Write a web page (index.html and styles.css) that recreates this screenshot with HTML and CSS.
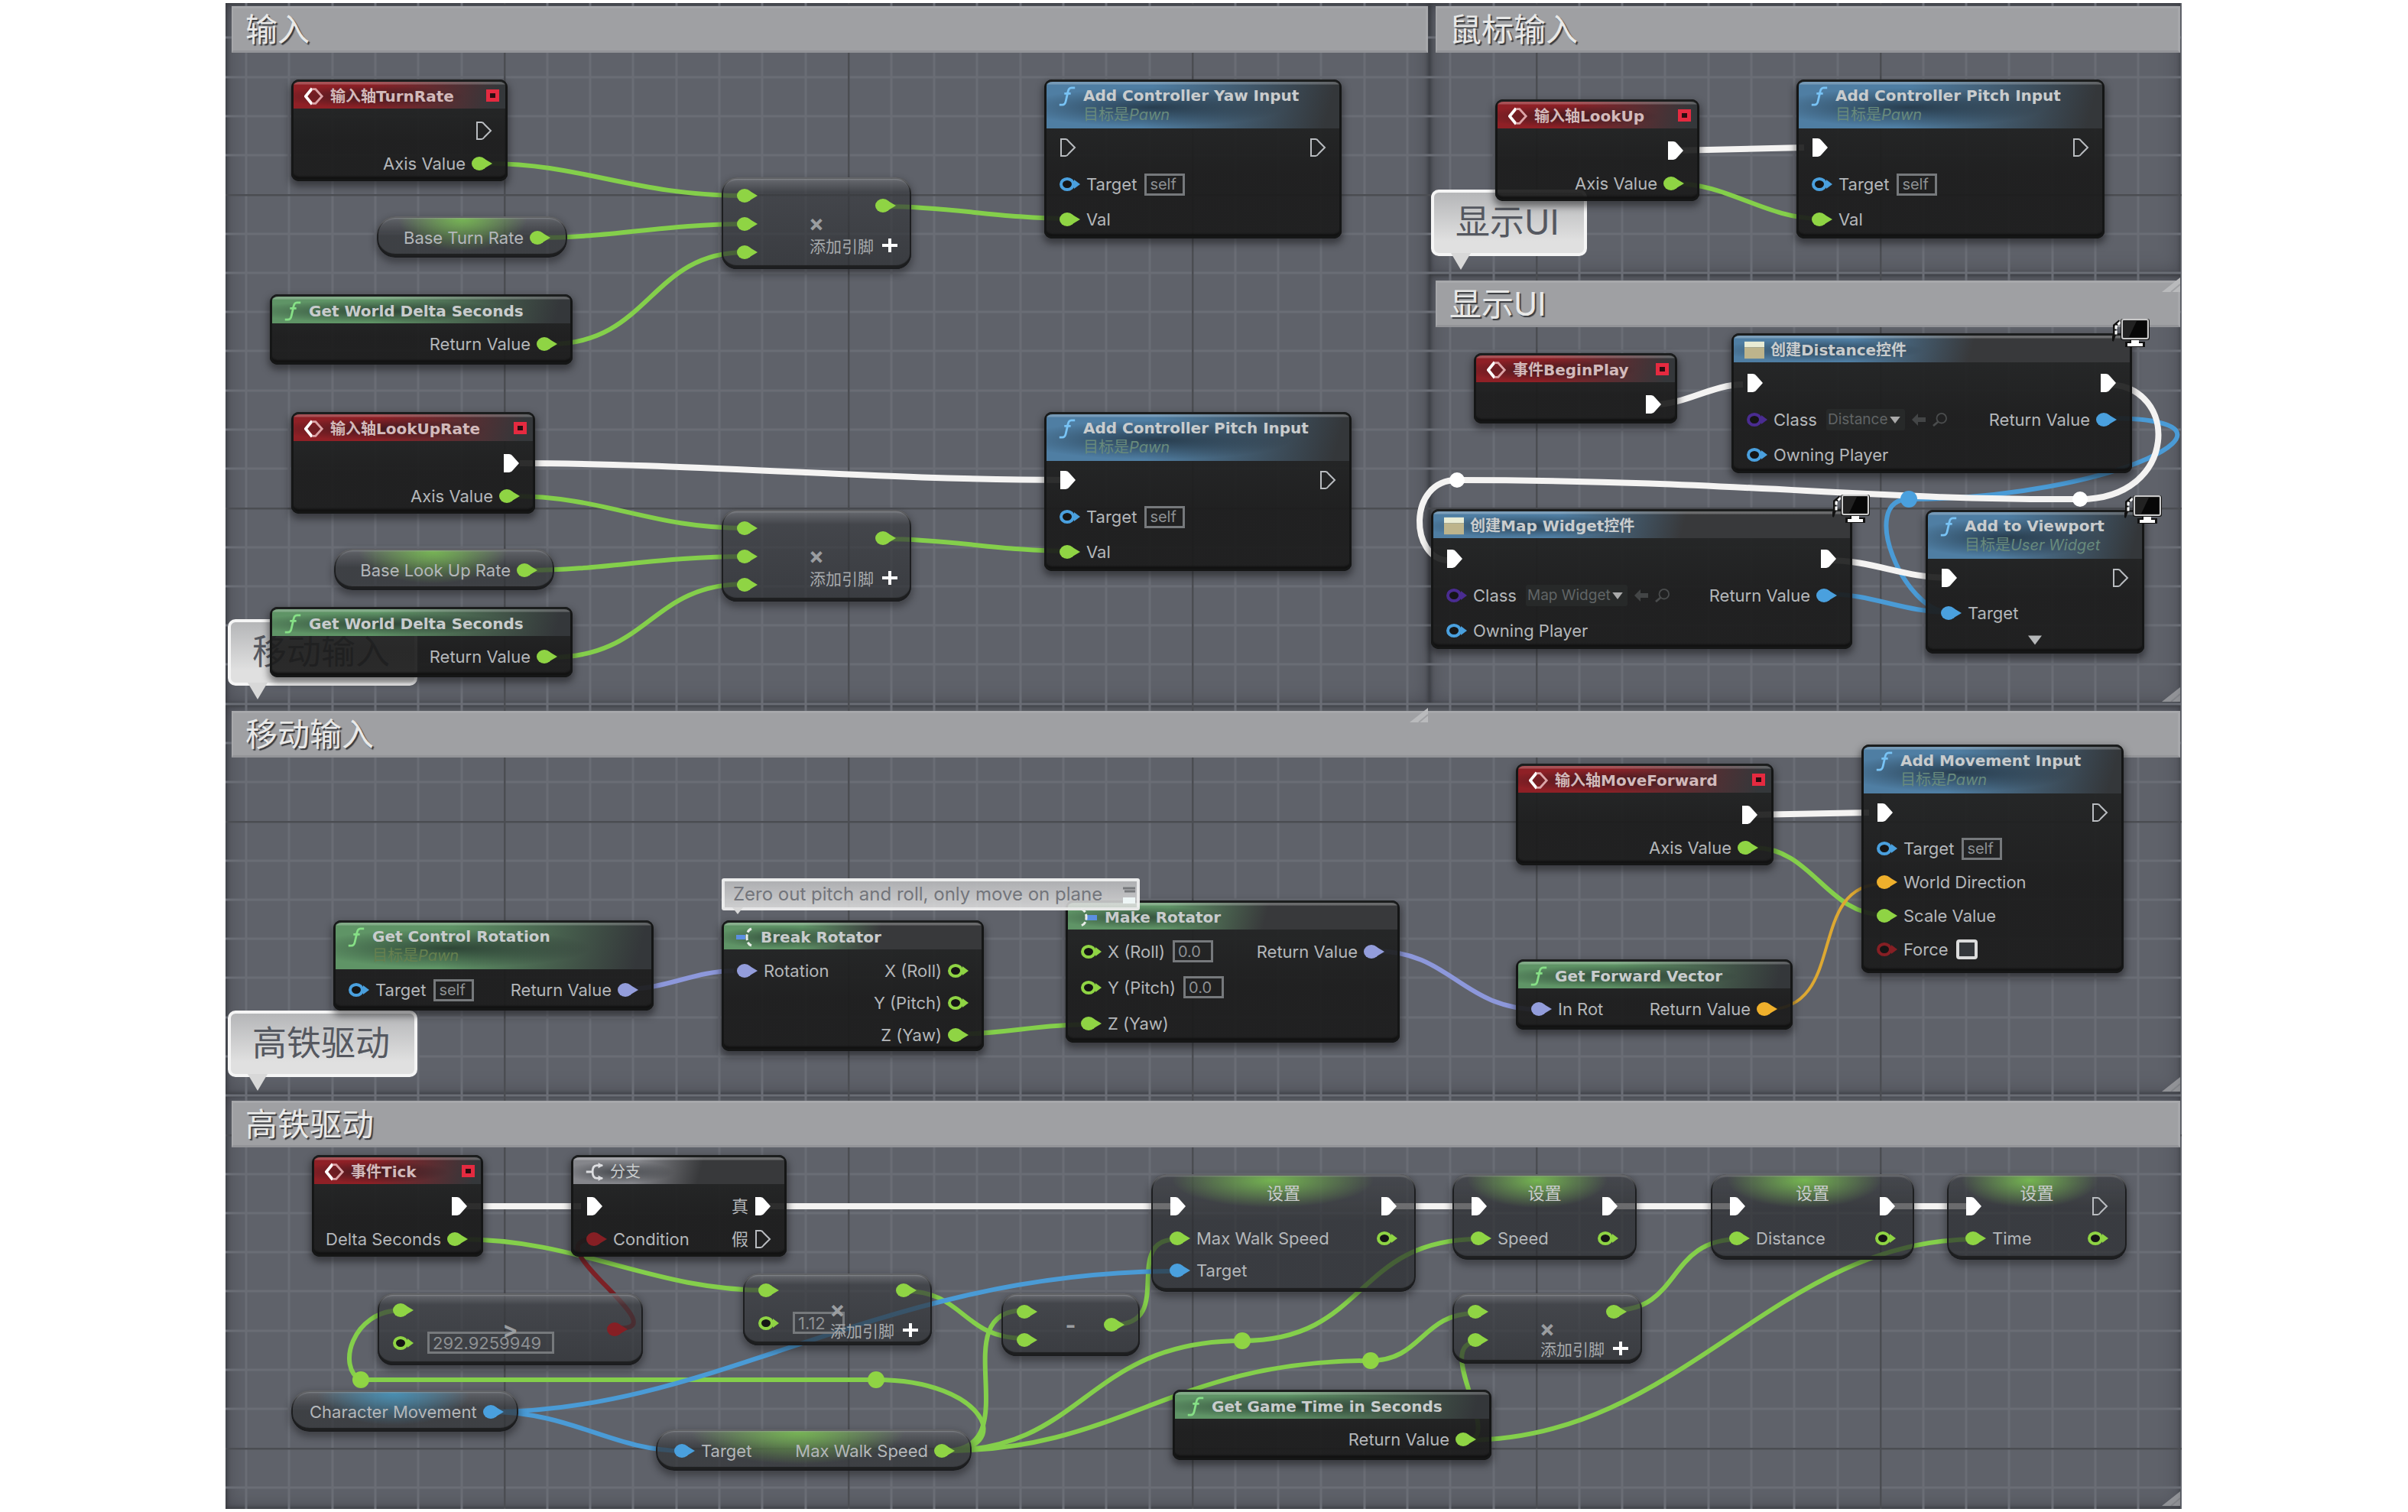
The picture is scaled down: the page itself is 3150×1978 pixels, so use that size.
FILE: index.html
```html
<!DOCTYPE html>
<html lang="zh-CN">
<head>
<meta charset="utf-8">
<title>蓝图</title>
<link rel="stylesheet" href="styles.css">
</head>
<body>
<svg class="defs" aria-hidden="true">
  <defs>
    <symbol id="dot" viewBox="0 0 27 20"><ellipse cx="10" cy="10" rx="10" ry="9" fill="currentColor"/><path d="M17 4l10 6-10 6z" fill="currentColor"/></symbol>
    <symbol id="ring" viewBox="0 0 27 20"><ellipse cx="10" cy="10" rx="8" ry="7" fill="#151515" stroke="currentColor" stroke-width="4"/><path d="M19 4l8 6-8 6z" fill="currentColor"/></symbol>
    <symbol id="exec" viewBox="0 0 22 26"><path d="M1 1h7q3 0 5 3l8 9-8 9q-2 3-5 3H1z" fill="#fff"/></symbol>
    <symbol id="exec-open" viewBox="0 0 22 26"><path d="M2 2h6q2 0 4 3l8 8-8 8q-2 3-4 3H2z" fill="none" stroke="#b9bcc0" stroke-width="2"/></symbol>
    <symbol id="event" viewBox="0 0 28 26"><path d="M11 2L2 13l9 11" fill="none" stroke="#fff" stroke-width="4"/><path d="M11 3h5l9 10-9 10h-5" fill="none" stroke="#dba5a8" stroke-width="3"/></symbol>
    <symbol id="func" viewBox="0 0 26 28"><path d="M24 2h-5q-4 0-5 6l-3 13q-1 5-5 5H2M9 10h9" fill="none" stroke="currentColor" stroke-width="3"/></symbol>
    <symbol id="widget" viewBox="0 0 28 24"><path d="M0 0h28v8H0z" fill="#e9ecd5"/><path d="M0 8h28v16H0z" fill="#bdb48c"/></symbol>
    <symbol id="branch" viewBox="0 0 28 26"><path d="M26 4h-8q-6 0-6 9t6 9h8M12 13H3" fill="none" stroke="#dcdde0" stroke-width="3"/><path d="M20 0l7 4-7 4zM20 18l7 4-7 4z" fill="#dcdde0"/></symbol>
    <symbol id="break" viewBox="0 0 26 26"><path d="M2 10h12v6H2z" fill="#5b8fe0"/><path d="M22 2q-6 2-6 11t6 11" fill="none" stroke="#e8ece8" stroke-width="3" stroke-dasharray="7 3"/></symbol>
    <symbol id="make" viewBox="0 0 26 26"><path d="M9 10h15v7H9z" fill="#5b8fe0"/><path d="M3 2q7 2 7 11T3 24" fill="none" stroke="#e8ece8" stroke-width="3" stroke-dasharray="7 3"/></symbol>
    <symbol id="plus" viewBox="0 0 22 20"><path d="M11 1v18M1 10h20" stroke="#fff" stroke-width="4"/></symbol>
    <symbol id="caret" viewBox="0 0 18 12"><path d="M0 0h18L9 12z" fill="currentColor"/></symbol>
    <symbol id="back" viewBox="0 0 20 18"><path d="M9 1L1 9l8 8v-5h10V6H9z" fill="#434546"/></symbol>
    <symbol id="find" viewBox="0 0 22 20"><circle cx="13" cy="8" r="7" fill="none" stroke="#4a4c4d" stroke-width="2"/><path d="M8 13l-7 6" stroke="#4a4c4d" stroke-width="3"/></symbol>
    <symbol id="grip" viewBox="0 0 24 19"><path d="M24 0v19H0z" fill="#b9babc"/><path d="M12 19L24 9" stroke="#a0a1a4" stroke-width="2"/></symbol>
    <symbol id="monitor" viewBox="0 0 50 40"><path d="M10 4L3 10v12l-3 8" fill="none" stroke="#111" stroke-width="4"/><path d="M11 5L5 11v11" fill="none" stroke="#fff" stroke-width="3" stroke-dasharray="5 2"/><rect x="11" y="1" width="38" height="28" rx="3" fill="#111"/><rect x="13" y="2" width="34" height="25" rx="2" fill="#222" stroke="#c9c9c9" stroke-width="2"/><path d="M32 4h13v21H22z" fill="#070707"/><path d="M17 31h26v7H17z" fill="#111"/><path d="M25 29h10v4h5v4H20v-4h5z" fill="#fff"/></symbol>
    <pattern id="mesh" x="659" y="254" width="450" height="410" patternUnits="userSpaceOnUse" patternTransform="translate(-295 -4)">
      <path d="M57 0v410M113 0v410M169 0v410M226 0v410M282 0v410M338 0v410M395 0v410M0 52h450M0 103h450M0 154h450M0 205h450M0 257h450M0 308h450M0 359h450" stroke="#6a6d75" stroke-width="3"/>
      <path d="M1 0v410M0 1h450" stroke="#4b4d52" stroke-width="3"/>
    </pattern>
  </defs>
</svg>

<main class="page">
  <div class="board">
    <section class="comment look flush"><h2>输入</h2><svg class="grip over"><use href="#grip"/></svg></section>
    <section class="comment mouse flush"><h2>鼠标输入</h2><svg class="grip over"><use href="#grip"/></svg></section>
    <section class="comment ui"><h2>显示UI</h2><svg class="grip"><use href="#grip"/></svg></section>
    <section class="comment move"><h2>移动输入</h2><svg class="grip"><use href="#grip"/></svg></section>
    <section class="comment train"><h2>高铁驱动</h2><svg class="grip"><use href="#grip"/></svg></section>
  </div>

  <svg class="mesh" aria-hidden="true"><rect width="100%" height="100%" fill="url(#mesh)"/></svg>

  <p class="bubble b-ui">显示UI</p>
  <p class="bubble b-move">移动输入</p>
  <p class="bubble b-train">高铁驱动</p>

  <svg class="wires" aria-hidden="true">
    <g class="w-float">
      <path d="M640 214C760 214 830 256 975 256"/>
      <path d="M705 311C800 311 870 293 975 293"/>
      <path d="M720 450C850 450 850 330 975 330"/>
      <path d="M1160 270C1240 270 1310 286 1400 286"/>
      <path d="M670 649C790 649 850 691 975 691"/>
      <path d="M690 746C790 746 860 728 975 728"/>
      <path d="M720 860C850 860 850 764 975 764"/>
      <path d="M1160 705C1240 705 1310 721 1400 721"/>
      <path d="M2190 240C2260 240 2310 286 2380 286"/>
      <path d="M2295 1109C2370 1109 2390 1197 2465 1197"/>
      <path d="M1250 1353C1310 1353 1360 1340 1425 1340"/>
      <path d="M600 1621C760 1621 850 1688 1005 1688"/>
      <path d="M1146 1805H472C440 1790 460 1714 525 1714"/>
      <path d="M1235 1898C1330 1898 1290 1805 1146 1805"/>
      <path d="M1235 1898C1350 1898 1230 1714 1340 1714"/>
      <path d="M1235 1898C1420 1898 1420 1754 1625 1754"/>
      <path d="M1235 1898C1470 1898 1530 1780 1793 1780"/>
      <path d="M1625 1754C1790 1754 1770 1621 1935 1621"/>
      <path d="M1793 1780C1860 1780 1860 1718 1930 1718"/>
      <path d="M1185 1689C1260 1689 1260 1751 1340 1751"/>
      <path d="M1457 1733C1540 1733 1465 1621 1540 1621"/>
      <path d="M2112 1714C2200 1714 2180 1621 2275 1621"/>
      <path d="M1918 1884C1970 1884 1870 1755 1935 1755"/>
      <path d="M1918 1884C2200 1884 2320 1621 2585 1621"/>
    </g>
    <g class="w-object">
      <path d="M2755 547C2980 547 2760 653 2497 653"/>
      <path d="M2497 653C2430 653 2490 801 2550 801"/>
      <path d="M2390 777C2450 777 2490 801 2550 801"/>
      <path d="M640 1847C940 1847 1150 1663 1540 1663"/>
      <path d="M640 1847C750 1847 800 1898 895 1898"/>
    </g>
    <g class="w-exec">
      <path d="M680 606C900 606 1150 628 1396 628"/>
      <path d="M2190 197L2360 193"/>
      <path d="M2165 529C2205 529 2240 503 2280 503"/>
      <path d="M2756 503C2852 503 2850 653 2721 653"/>
      <path d="M2721 653C2450 655 2270 628 1906 628"/>
      <path d="M1906 628C1840 628 1845 733 1895 733"/>
      <path d="M2392 733C2450 733 2490 756 2550 756"/>
      <path d="M2290 1066L2445 1063"/>
      <path d="M600 1578H760M1000 1578H1540M1815 1578H1934M2105 1578H2270M2470 1578H2584"/>
    </g>
    <path class="w-vector" d="M2310 1321C2420 1321 2360 1156 2465 1156"/>
    <g class="w-rotator">
      <path d="M820 1294C870 1294 910 1270 960 1270"/>
      <path d="M1797 1244C1900 1244 1910 1321 2018 1321"/>
    </g>
    <path class="w-bool" d="M805 1737C895 1745 695 1625 775 1621"/>
    <g class="knots">
      <g class="k-exec"><circle cx="2721" cy="653" r="10"/><circle cx="1906" cy="628" r="10"/></g>
      <circle class="k-object" cx="2497" cy="653" r="11"/>
      <g class="k-float"><circle cx="472" cy="1805" r="11"/><circle cx="1146" cy="1805" r="11"/><circle cx="1625" cy="1754" r="11"/><circle cx="1793" cy="1780" r="11"/></g>
    </g>
  </svg>

  <!-- 输入 -->
  <article class="node event n-turn">
    <h3><svg class="icon"><use href="#event"/></svg>输入轴TurnRate<i class="delegate"></i></h3>
    <div class="body"><div class="outs">
      <span class="pin exec"><svg><use href="#exec-open"/></svg></span>
      <span class="pin float">Axis Value<svg><use href="#dot"/></svg></span>
    </div></div>
  </article>
  <article class="node getter float-get n-baseturn"><span class="pin float">Base Turn Rate<svg><use href="#dot"/></svg></span></article>
  <article class="node pure n-delta1">
    <h3><svg class="icon"><use href="#func"/></svg>Get World Delta Seconds</h3>
    <div class="body"><div class="outs"><span class="pin float">Return Value<svg><use href="#dot"/></svg></span></div></div>
  </article>
  <article class="node op op3 n-mul1">
    <div class="ins"><span class="pin float"><svg><use href="#dot"/></svg></span><span class="pin float"><svg><use href="#dot"/></svg></span><span class="pin float"><svg><use href="#dot"/></svg></span></div>
    <div class="outs"><span class="pin float"><svg><use href="#dot"/></svg></span></div>
    <b class="sign">×</b><button class="add">添加引脚<svg><use href="#plus"/></svg></button>
  </article>
  <article class="node call n-yaw">
    <h3><svg class="icon"><use href="#func"/></svg><span>Add Controller Yaw Input<small>目标是<em>Pawn</em></small></span></h3>
    <div class="body"><div class="ins">
      <span class="pin exec"><svg><use href="#exec-open"/></svg></span>
      <label class="pin object"><svg><use href="#ring"/></svg>Target<input value="self"></label>
      <span class="pin float"><svg><use href="#dot"/></svg>Val</span>
    </div><div class="outs"><span class="pin exec"><svg><use href="#exec-open"/></svg></span></div></div>
  </article>
  <article class="node event n-lookrate">
    <h3><svg class="icon"><use href="#event"/></svg>输入轴LookUpRate<i class="delegate"></i></h3>
    <div class="body"><div class="outs">
      <span class="pin exec"><svg><use href="#exec"/></svg></span>
      <span class="pin float">Axis Value<svg><use href="#dot"/></svg></span>
    </div></div>
  </article>
  <article class="node getter float-get n-baselook"><span class="pin float">Base Look Up Rate<svg><use href="#dot"/></svg></span></article>
  <article class="node pure n-delta2">
    <h3><svg class="icon"><use href="#func"/></svg>Get World Delta Seconds</h3>
    <div class="body"><div class="outs"><span class="pin float">Return Value<svg><use href="#dot"/></svg></span></div></div>
  </article>
  <article class="node op op3 n-mul2">
    <div class="ins"><span class="pin float"><svg><use href="#dot"/></svg></span><span class="pin float"><svg><use href="#dot"/></svg></span><span class="pin float"><svg><use href="#dot"/></svg></span></div>
    <div class="outs"><span class="pin float"><svg><use href="#dot"/></svg></span></div>
    <b class="sign">×</b><button class="add">添加引脚<svg><use href="#plus"/></svg></button>
  </article>
  <article class="node call n-pitch1">
    <h3><svg class="icon"><use href="#func"/></svg><span>Add Controller Pitch Input<small>目标是<em>Pawn</em></small></span></h3>
    <div class="body"><div class="ins">
      <span class="pin exec"><svg><use href="#exec"/></svg></span>
      <label class="pin object"><svg><use href="#ring"/></svg>Target<input value="self"></label>
      <span class="pin float"><svg><use href="#dot"/></svg>Val</span>
    </div><div class="outs"><span class="pin exec"><svg><use href="#exec-open"/></svg></span></div></div>
  </article>

  <!-- 鼠标输入 -->
  <article class="node event n-lookup">
    <h3><svg class="icon"><use href="#event"/></svg>输入轴LookUp<i class="delegate"></i></h3>
    <div class="body"><div class="outs">
      <span class="pin exec"><svg><use href="#exec"/></svg></span>
      <span class="pin float">Axis Value<svg><use href="#dot"/></svg></span>
    </div></div>
  </article>
  <article class="node call n-pitch2">
    <h3><svg class="icon"><use href="#func"/></svg><span>Add Controller Pitch Input<small>目标是<em>Pawn</em></small></span></h3>
    <div class="body"><div class="ins">
      <span class="pin exec"><svg><use href="#exec"/></svg></span>
      <label class="pin object"><svg><use href="#ring"/></svg>Target<input value="self"></label>
      <span class="pin float"><svg><use href="#dot"/></svg>Val</span>
    </div><div class="outs"><span class="pin exec"><svg><use href="#exec-open"/></svg></span></div></div>
  </article>

  <!-- 显示UI -->
  <article class="node event n-begin">
    <h3><svg class="icon"><use href="#event"/></svg>事件BeginPlay<i class="delegate"></i></h3>
    <div class="body"><div class="outs"><span class="pin exec"><svg><use href="#exec"/></svg></span></div></div>
  </article>
  <article class="node create n-distance">
    <h3><svg class="icon"><use href="#widget"/></svg>创建Distance控件</h3>
    <div class="body"><div class="ins">
      <span class="pin exec"><svg><use href="#exec"/></svg></span>
      <span class="pin class"><svg><use href="#ring"/></svg><label for="cls-distance">Class</label><span class="pick"><select id="cls-distance"><option>Distance</option></select><svg><use href="#caret"/></svg></span><svg class="tool"><use href="#back"/></svg><svg class="tool"><use href="#find"/></svg></span>
      <span class="pin object"><svg><use href="#ring"/></svg>Owning Player</span>
    </div><div class="outs">
      <span class="pin exec"><svg><use href="#exec"/></svg></span>
      <span class="pin object">Return Value<svg><use href="#dot"/></svg></span>
    </div></div>
    <svg class="badge"><use href="#monitor"/></svg>
  </article>
  <article class="node create n-map">
    <h3><svg class="icon"><use href="#widget"/></svg>创建Map Widget控件</h3>
    <div class="body"><div class="ins">
      <span class="pin exec"><svg><use href="#exec"/></svg></span>
      <span class="pin class"><svg><use href="#ring"/></svg><label for="cls-map">Class</label><span class="pick"><select id="cls-map"><option>Map Widget</option></select><svg><use href="#caret"/></svg></span><svg class="tool"><use href="#back"/></svg><svg class="tool"><use href="#find"/></svg></span>
      <span class="pin object"><svg><use href="#ring"/></svg>Owning Player</span>
    </div><div class="outs">
      <span class="pin exec"><svg><use href="#exec"/></svg></span>
      <span class="pin object">Return Value<svg><use href="#dot"/></svg></span>
    </div></div>
    <svg class="badge"><use href="#monitor"/></svg>
  </article>
  <article class="node call n-viewport">
    <h3><svg class="icon"><use href="#func"/></svg><span>Add to Viewport<small>目标是<em>User Widget</em></small></span></h3>
    <div class="body"><div class="ins">
      <span class="pin exec"><svg><use href="#exec"/></svg></span>
      <span class="pin object"><svg><use href="#dot"/></svg>Target</span>
    </div><div class="outs"><span class="pin exec"><svg><use href="#exec-open"/></svg></span></div></div>
    <button class="more" aria-label="展开"><svg><use href="#caret"/></svg></button>
    <svg class="badge"><use href="#monitor"/></svg>
  </article>

  <!-- 移动输入 -->
  <article class="node pure tall n-control">
    <h3><svg class="icon"><use href="#func"/></svg><span>Get Control Rotation<small>目标是<em>Pawn</em></small></span></h3>
    <div class="body"><div class="ins"><label class="pin object"><svg><use href="#ring"/></svg>Target<input value="self"></label></div>
    <div class="outs"><span class="pin rotator">Return Value<svg><use href="#dot"/></svg></span></div></div>
  </article>
  <article class="node pure short n-break">
    <h3><svg class="icon"><use href="#break"/></svg>Break Rotator</h3>
    <div class="body"><div class="ins"><span class="pin rotator"><svg><use href="#dot"/></svg>Rotation</span></div>
    <div class="outs">
      <span class="pin float">X (Roll)<svg><use href="#ring"/></svg></span>
      <span class="pin float">Y (Pitch)<svg><use href="#ring"/></svg></span>
      <span class="pin float">Z (Yaw)<svg><use href="#dot"/></svg></span>
    </div></div>
  </article>
  <article class="node pure short n-make">
    <h3><svg class="icon"><use href="#make"/></svg>Make Rotator</h3>
    <div class="body"><div class="ins">
      <label class="pin float"><svg><use href="#ring"/></svg>X (Roll)<input value="0.0"></label>
      <label class="pin float"><svg><use href="#ring"/></svg>Y (Pitch)<input value="0.0"></label>
      <span class="pin float"><svg><use href="#dot"/></svg>Z (Yaw)</span>
    </div><div class="outs"><span class="pin rotator">Return Value<svg><use href="#dot"/></svg></span></div></div>
  </article>
  <p class="bubble note">Zero out pitch and roll, only move on plane<svg viewBox="0 0 20 32"><path d="M2 8h16M4 12h14" stroke="#77797c" stroke-width="3"/><path d="M2 20h16v8H2z" fill="#eef6f6"/></svg></p>
  <article class="node event n-forward">
    <h3><svg class="icon"><use href="#event"/></svg>输入轴MoveForward<i class="delegate"></i></h3>
    <div class="body"><div class="outs">
      <span class="pin exec"><svg><use href="#exec"/></svg></span>
      <span class="pin float">Axis Value<svg><use href="#dot"/></svg></span>
    </div></div>
  </article>
  <article class="node pure n-vector">
    <h3><svg class="icon"><use href="#func"/></svg>Get Forward Vector</h3>
    <div class="body"><div class="ins"><span class="pin rotator"><svg><use href="#dot"/></svg>In Rot</span></div>
    <div class="outs"><span class="pin vector">Return Value<svg><use href="#dot"/></svg></span></div></div>
  </article>
  <article class="node call n-movement">
    <h3><svg class="icon"><use href="#func"/></svg><span>Add Movement Input<small>目标是<em>Pawn</em></small></span></h3>
    <div class="body"><div class="ins">
      <span class="pin exec"><svg><use href="#exec"/></svg></span>
      <label class="pin object"><svg><use href="#ring"/></svg>Target<input value="self"></label>
      <span class="pin vector"><svg><use href="#dot"/></svg>World Direction</span>
      <span class="pin float"><svg><use href="#dot"/></svg>Scale Value</span>
      <label class="pin bool"><svg><use href="#ring"/></svg>Force<input type="checkbox"></label>
    </div><div class="outs"><span class="pin exec"><svg><use href="#exec-open"/></svg></span></div></div>
  </article>

  <!-- 高铁驱动 -->
  <article class="node event n-tick">
    <h3><svg class="icon"><use href="#event"/></svg>事件Tick<i class="delegate"></i></h3>
    <div class="body"><div class="outs">
      <span class="pin exec"><svg><use href="#exec"/></svg></span>
      <span class="pin float">Delta Seconds<svg><use href="#dot"/></svg></span>
    </div></div>
  </article>
  <article class="node flow n-branch">
    <h3><svg class="icon"><use href="#branch"/></svg>分支</h3>
    <div class="body"><div class="ins">
      <span class="pin exec"><svg><use href="#exec"/></svg></span>
      <span class="pin bool"><svg><use href="#dot"/></svg>Condition</span>
    </div><div class="outs">
      <span class="pin exec">真<svg><use href="#exec"/></svg></span>
      <span class="pin exec last">假<svg><use href="#exec-open"/></svg></span>
    </div></div>
  </article>
  <article class="node op n-greater">
    <div class="ins"><span class="pin float"><svg><use href="#dot"/></svg></span><span class="pin float"><svg><use href="#ring"/></svg><input class="wide" aria-label="B" value="292.9259949"></span></div>
    <div class="outs mid"><span class="pin bool"><svg><use href="#dot"/></svg></span></div>
    <b class="sign">&gt;</b>
  </article>
  <article class="node op n-mul3">
    <div class="ins"><span class="pin float"><svg><use href="#dot"/></svg></span><span class="pin float"><svg><use href="#ring"/></svg><input class="mid-size" aria-label="B" value="1.12"></span></div>
    <div class="outs"><span class="pin float"><svg><use href="#dot"/></svg></span></div>
    <b class="sign">×</b><button class="add">添加引脚<svg><use href="#plus"/></svg></button>
  </article>
  <article class="node op n-minus">
    <div class="ins"><span class="pin float"><svg><use href="#dot"/></svg></span><span class="pin float"><svg><use href="#dot"/></svg></span></div>
    <div class="outs mid"><span class="pin float"><svg><use href="#dot"/></svg></span></div>
    <b class="sign">-</b>
  </article>
  <article class="node getter object-get n-character"><span class="pin object">Character Movement<svg><use href="#dot"/></svg></span></article>
  <article class="node getter float-get n-maxwalk"><span class="pin object"><svg><use href="#dot"/></svg>Target</span><span class="pin float">Max Walk Speed<svg><use href="#dot"/></svg></span></article>
  <article class="node setter n-set1">
    <h3>设置</h3>
    <div class="ins"><span class="pin exec"><svg><use href="#exec"/></svg></span><span class="pin float"><svg><use href="#dot"/></svg>Max Walk Speed</span><span class="pin object"><svg><use href="#dot"/></svg>Target</span></div>
    <div class="outs"><span class="pin exec"><svg><use href="#exec"/></svg></span><span class="pin float"><svg><use href="#ring"/></svg></span></div>
  </article>
  <article class="node setter n-set2">
    <h3>设置</h3>
    <div class="ins"><span class="pin exec"><svg><use href="#exec"/></svg></span><span class="pin float"><svg><use href="#dot"/></svg>Speed</span></div>
    <div class="outs"><span class="pin exec"><svg><use href="#exec"/></svg></span><span class="pin float"><svg><use href="#ring"/></svg></span></div>
  </article>
  <article class="node setter n-set3">
    <h3>设置</h3>
    <div class="ins"><span class="pin exec"><svg><use href="#exec"/></svg></span><span class="pin float"><svg><use href="#dot"/></svg>Distance</span></div>
    <div class="outs"><span class="pin exec"><svg><use href="#exec"/></svg></span><span class="pin float"><svg><use href="#ring"/></svg></span></div>
  </article>
  <article class="node setter n-set4">
    <h3>设置</h3>
    <div class="ins"><span class="pin exec"><svg><use href="#exec"/></svg></span><span class="pin float"><svg><use href="#dot"/></svg>Time</span></div>
    <div class="outs"><span class="pin exec"><svg><use href="#exec-open"/></svg></span><span class="pin float"><svg><use href="#ring"/></svg></span></div>
  </article>
  <article class="node op n-mul4">
    <div class="ins"><span class="pin float"><svg><use href="#dot"/></svg></span><span class="pin float"><svg><use href="#dot"/></svg></span></div>
    <div class="outs"><span class="pin float"><svg><use href="#dot"/></svg></span></div>
    <b class="sign">×</b><button class="add">添加引脚<svg><use href="#plus"/></svg></button>
  </article>
  <article class="node pure n-gametime">
    <h3><svg class="icon"><use href="#func"/></svg>Get Game Time in Seconds</h3>
    <div class="body"><div class="outs"><span class="pin float">Return Value<svg><use href="#dot"/></svg></span></div></div>
  </article>
</main>
</body>
</html>
```
FILE: styles.css
```css
:root {
  --float: #8fd444;
  --object: #4aa0de;
  --rotator: #939ddb;
  --vector: #efb02c;
  --bool: #861f24;
  --class: #4a2c91;
}

* { box-sizing: border-box; }

body {
  margin: 0;
  background: #fff;
  color: #b4b7ba;
  font: 22px/26px Inter, "Noto Sans CJK SC", sans-serif;
}

h2, h3, p { margin: 0; }
.defs { position: absolute; width: 0; height: 0; }

.page {
  position: relative;
  padding: 4px 296px 4px 295px;
}

/* Comment boxes */
.board {
  display: grid;
  grid-template-columns: 1575fr 984fr;
  grid-template-rows: minmax(355px, auto) minmax(563px, auto) minmax(510px, auto) minmax(542px, auto);
  grid-template-areas: "look mouse" "look ui" "move move" "train train";
}
.comment {
  position: relative;
  padding: 8px 2px 0 8px;
  background: #5f626a;
  box-shadow: inset 0 0 4px 2px rgba(45, 46, 50, .6), inset 0 0 26px rgba(45, 46, 52, .55);
}
.comment.flush { padding-top: 4px; }
.look { grid-area: look; }
.mouse { grid-area: mouse; }
.ui { grid-area: ui; }
.move { grid-area: move; }
.train { grid-area: train; }
.comment h2 {
  position: relative;
  z-index: 2;
  height: 61px;
  padding-left: 16px;
  border: 3px solid #a7a8ab;
  border-width: 3px 3px 3px 2px;
  border-bottom-color: #939498;
  background: #9fa0a3;
  color: #e9e9e8;
  font: 400 42px/56px Inter, "Noto Sans CJK SC", sans-serif;
  text-shadow: 2px 2px 1px #3a3c40;
}
.grip { position: absolute; right: 2px; bottom: 4px; width: 24px; height: 19px; opacity: .6; }
.grip.over { bottom: -23px; z-index: 4; opacity: 1; }

.mesh, .wires { position: absolute; pointer-events: none; }
.mesh { top: 4px; left: 295px; width: calc(100% - 591px); height: calc(100% - 8px); }
.wires { top: 0; left: 0; width: 100%; height: 100%; z-index: 4; fill: none; stroke-width: 6px; }
.w-float { stroke: #84cf4b; }
.w-exec { stroke: #f4f3f2; stroke-width: 8px; }
.w-object { stroke: #4a9bd6; }
.w-vector { stroke: #dda832; stroke-width: 4px; }
.w-rotator { stroke: #8d98db; }
.w-bool { stroke: #7c2126; }
.knots { stroke: none; }
.k-exec { fill: #fff; }
.k-object { fill: var(--object); }
.k-float { fill: var(--float); }

/* Comment bubbles */
.bubble {
  position: absolute;
  z-index: 3;
  height: 87px;
  padding: 12px 32px 12px 28px;
  border: 4px solid #f5f5f5;
  border-radius: 10px;
  background: linear-gradient(#b5b6b8, #e0e0e0 80%);
  color: #555860;
  font-size: 45px;
  line-height: 54px;
  white-space: nowrap;
}
.bubble::after {
  content: "";
  position: absolute;
  top: 100%;
  left: 22px;
  border: 13px solid transparent;
  border-top: 22px solid #d8d8d8;
  border-bottom: 0;
}
.b-ui { left: 1872px; top: 248px; }
.b-move { left: 298px; top: 810px; }
.b-train { left: 298px; top: 1322px; }
.bubble.note {
  left: 944px;
  top: 1149px;
  z-index: 6;
  display: flex;
  justify-content: space-between;
  align-items: center;
  width: 547px;
  height: 42px;
  padding: 0 0 0 11px;
  border-radius: 3px;
  background: linear-gradient(rgba(181, 182, 184, .92), rgba(224, 224, 224, .85));
  border-color: rgba(245, 245, 245, .8);
  color: #73757b;
  font-size: 24px;
  line-height: 26px;
}
.note::after { left: 10px; border-width: 9px 7px 0; }
.note svg { width: 20px; height: 32px; }

/* Nodes */
.node {
  position: absolute;
  z-index: 5;
  border-radius: 10px;
  background: linear-gradient(rgba(35, 37, 37, .92), rgba(27, 27, 27, .92) 60%);
  box-shadow: inset 0 0 0 3px #151616, inset 0 -6px 2px #121212, 0 5px 10px 2px rgba(20, 20, 22, .5);
}
.node h3 {
  --tint: #4f7ea3;
  display: flex;
  align-items: center;
  gap: 8px;
  height: 38px;
  margin: 0 3px;
  padding: 3px 8px 0 14px;
  border-top: 3px solid #1c1e1e;
  border-radius: 8px 8px 0 0;
  background:
    linear-gradient(rgba(255, 255, 255, .22) 3px, transparent 4px),
    radial-gradient(ellipse 45% 42% at 36% 55%, rgba(15, 20, 25, .6), transparent),
    linear-gradient(105deg, var(--tint) 35%, transparent 95%),
    #34373a;
  color: #c9cccd;
  font-family: "DejaVu Sans", "Noto Sans CJK SC", sans-serif;
  font-size: 20px;
  font-weight: 700;
  line-height: 24px;
  white-space: nowrap;
}
.event h3 { --tint: #8f2026; color: #d3babb; }
.call h3, .pure.tall h3 { height: 64px; padding-top: 6px; align-items: flex-start; }
.pure h3 { --tint: #5f9466; }
.flow h3, .create h3, .short h3 {
  background:
    linear-gradient(rgba(255, 255, 255, .25) 3px, transparent 4px),
    radial-gradient(ellipse 26% 42% at 22% 55%, rgba(15, 20, 25, .55), transparent),
    linear-gradient(105deg, var(--tint) 30%, transparent 60%),
    #38393b;
}
.flow h3 { --tint: #85868b; font-weight: 400; }
.icon { flex: none; width: 26px; height: 26px; color: #78c3f5; }
.pure .icon { color: #86e086; }
.node small { display: block; color: #688a7c; font-family: Inter, "Noto Sans CJK SC", sans-serif; font-size: 20px; font-weight: 400; line-height: 27px; }
.pure small { color: #66804f; }
.delegate { flex: none; width: 17px; height: 16px; margin: 0 0 2px auto; border: 5px solid #e52a40; background: #2a0c10; }

.body { --row: 46px; display: flex; justify-content: space-between; }
.event .body, .flow .body { --row: 36px; padding: 4px 0 5px; }
.create .body { padding-top: 2px; }
.pure .body { --row: 54px; }
.n-break .body { --row: 42px; padding-top: 7px; }
.n-make .body { --row: 47px; padding-top: 5px; }
.n-movement .body { --row: 44px; }
.n-viewport .body { --row: 42px; }
.ins, .outs { display: flex; flex-direction: column; }
.ins { padding-left: 20px; }
.outs { margin-left: auto; padding-right: 20px; align-items: flex-end; }

.pin { display: flex; align-items: center; gap: 8px; height: var(--row); white-space: nowrap; }
.pin > svg { flex: none; width: 27px; height: 20px; }
.pin.exec { height: 50px; }
.pin.exec.last { height: 36px; }
.pin.exec > svg { width: 22px; height: 26px; }
.float > svg { color: var(--float); }
.object > svg { color: var(--object); }
.rotator > svg { color: var(--rotator); }
.vector > svg { color: var(--vector); }
.bool > svg { color: var(--bool); }
.class > svg { color: var(--class); }

input {
  width: 53px;
  height: 29px;
  margin: 0 0 0 2px;
  padding: 0 4px;
  border: 3px solid #76797c;
  border-radius: 0;
  background: transparent;
  color: #8d9093;
  font: 20px/22px Inter, sans-serif;
}
.op input { margin-left: 10px; font-size: 22px; }
input.wide { width: 166px; }
input.mid-size { width: 68px; }
input[type="checkbox"] {
  appearance: none;
  width: 28px;
  height: 26px;
  border: 4px solid #dcdcdc;
  border-radius: 4px;
  background: #34373b;
}
.pick { display: flex; align-items: center; height: 28px; margin-left: 4px; padding: 0 6px 0 0; border-radius: 3px; background: #272929; }
.pick select { appearance: none; padding: 0 2px; border: 0; background: transparent; color: #606465; font: 19px/24px Inter, sans-serif; }
.pick svg { width: 14px; height: 9px; color: #aaa; }
.pin > .tool { width: 20px; height: 18px; }
.badge { position: absolute; top: -20px; right: -24px; width: 50px; height: 40px; }
.more { display: block; margin: 8px auto 0; padding: 0; border: 0; background: none; color: #b5b7b9; line-height: 0; }
.more svg { width: 18px; height: 13px; }

/* Compact nodes */
.getter, .setter, .op {
  display: flex;
  background: linear-gradient(rgba(112, 114, 119, .7), rgba(54, 56, 60, .68) 16%, rgba(40, 42, 45, .68));
  box-shadow: inset 0 4px 2px -1px rgba(170, 172, 176, .5), inset 0 0 0 2px #1c1d1f, inset 0 -5px 1px #1e1f20, 0 5px 10px 2px rgba(20, 20, 22, .4);
}
.getter {
  --row: 54px;
  --glow: rgba(122, 192, 82, .9);
  height: 54px;
  padding: 1px 22px 0 24px;
  border-radius: 24px;
  background:
    radial-gradient(ellipse 34% 80% at 45% 4%, var(--glow), transparent),
    linear-gradient(rgba(100, 102, 107, .75), rgba(48, 50, 53, .7) 45%, rgba(48, 50, 53, .7));
}
.getter .pin:last-child { margin-left: auto; }
.object-get { --glow: rgba(70, 150, 190, .9); }
.setter, .op { border-radius: 20px; }
.setter {
  --row: 42px;
  min-height: 112px;
  padding: 21px 4px 0;
  background:
    radial-gradient(ellipse 38% 36px at 46% 8px, rgba(122, 192, 82, .9), transparent),
    linear-gradient(rgba(60, 62, 66, .7), rgba(40, 42, 45, .68) 40%);
}
.setter .pin { height: 42px; }
.setter h3 {
  position: absolute;
  top: 12px;
  right: 0;
  left: 0;
  display: block;
  height: 28px;
  padding: 0;
  border: 0;
  background: none;
  font-size: 22px;
  font-weight: 400;
  line-height: 28px;
  text-align: center;
}
.op { --row: 43px; }
.op .outs.mid { justify-content: center; }
.op3 { --row: 37px; padding-top: 5px; }
.op3 .outs { padding-top: 13px; }
.n-minus, .n-mul4 { --row: 37px; padding-top: 5px; }
.n-minus .outs { padding-bottom: 5px; }
.sign { position: absolute; top: 50%; left: 50%; translate: -50% -50%; color: #9a9da0; font-size: 30px; line-height: 28px; }
.add {
  position: absolute;
  right: 17px;
  bottom: 6px;
  display: flex;
  align-items: center;
  gap: 10px;
  padding: 0;
  border: 0;
  background: none;
  color: #a6a9ac;
  font: 21px/28px "Noto Sans CJK SC", sans-serif;
}
.add svg { width: 22px; height: 20px; }
.op3 .add { bottom: 17px; }

/* Positions on the graph */
.n-turn { left: 381px; top: 104px; width: 283px; }
.n-baseturn { left: 493px; top: 283px; width: 249px; }
.n-delta1 { left: 353px; top: 385px; width: 396px; }
.n-mul1 { left: 944px; top: 232px; width: 248px; height: 120px; }
.n-yaw { left: 1366px; top: 104px; width: 389px; height: 208px; }
.n-lookrate { left: 381px; top: 539px; width: 319px; }
.n-baselook { left: 437px; top: 718px; width: 288px; }
.n-delta2 { left: 353px; top: 794px; width: 396px; }
.n-mul2 { left: 944px; top: 667px; width: 248px; height: 120px; }
.n-pitch1 { left: 1366px; top: 539px; width: 402px; height: 208px; }
.n-lookup { left: 1956px; top: 130px; width: 267px; }
.n-pitch2 { left: 2350px; top: 104px; width: 403px; height: 208px; }
.n-begin { left: 1928px; top: 462px; width: 266px; height: 92px; }
.n-distance { left: 2265px; top: 436px; width: 524px; height: 183px; }
.n-map { left: 1872px; top: 666px; width: 551px; height: 183px; }
.n-viewport { left: 2519px; top: 667px; width: 286px; height: 188px; }
.n-control { left: 436px; top: 1204px; width: 419px; }
.n-break { left: 944px; top: 1204px; width: 343px; height: 171px; }
.n-make { left: 1394px; top: 1178px; width: 437px; height: 186px; }
.n-forward { left: 1983px; top: 999px; width: 337px; }
.n-vector { left: 1983px; top: 1255px; width: 362px; }
.n-movement { left: 2435px; top: 974px; width: 343px; height: 299px; }
.n-tick { left: 408px; top: 1511px; width: 224px; }
.n-branch { left: 747px; top: 1511px; width: 282px; }
.n-greater { left: 494px; top: 1692px; width: 347px; height: 94px; }
.n-mul3 { left: 972px; top: 1666px; width: 247px; height: 94px; }
.n-minus { left: 1310px; top: 1692px; width: 181px; height: 82px; }
.n-character { left: 381px; top: 1819px; width: 297px; }
.n-maxwalk { left: 858px; top: 1870px; width: 413px; }
.n-set1 { left: 1506px; top: 1536px; width: 346px; height: 154px; }
.n-set2 { left: 1900px; top: 1536px; width: 241px; }
.n-set3 { left: 2238px; top: 1536px; width: 266px; }
.n-set4 { left: 2547px; top: 1536px; width: 235px; }
.n-mul4 { left: 1900px; top: 1692px; width: 248px; height: 92px; }
.n-gametime { left: 1534px; top: 1818px; width: 417px; }
```
